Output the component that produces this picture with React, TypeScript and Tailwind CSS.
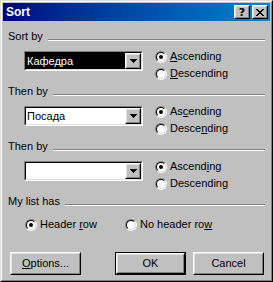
import React from 'react';

// Win98-style Excel "Sort" dialog

const raised = 'border border-t-white border-l-white border-r-black border-b-black';
const raisedInner = 'border border-t-[#dfdfdf] border-l-[#dfdfdf] border-r-[#808080] border-b-[#808080] bg-[#c0c0c0]';
const sunken = 'border border-t-[#808080] border-l-[#808080] border-r-white border-b-white';
const sunkenInner = 'border border-t-black border-l-black border-r-[#dfdfdf] border-b-[#dfdfdf]';

function Radio({ checked = false }: { checked?: boolean }) {
  return (
    <span className={`inline-block w-[12px] h-[12px] shrink-0 rounded-full ${sunken}`}>
      <span className={`flex items-center justify-center w-full h-full rounded-full bg-white ${sunkenInner}`}>
        {checked && <span className="w-[4px] h-[4px] rounded-full bg-black" />}
      </span>
    </span>
  );
}

function RadioRow({ checked, children }: { checked?: boolean; children: React.ReactNode }) {
  return (
    <div className="flex items-center h-[17px]">
      <Radio checked={checked} />
      <span className="ml-[3px] whitespace-nowrap">{children}</span>
    </div>
  );
}

function DownArrow() {
  return (
    <svg width="7" height="4" viewBox="0 0 7 4" shapeRendering="crispEdges">
      <rect x="0" y="0" width="7" height="1" fill="#000" />
      <rect x="1" y="1" width="5" height="1" fill="#000" />
      <rect x="2" y="2" width="3" height="1" fill="#000" />
      <rect x="3" y="3" width="1" height="1" fill="#000" />
    </svg>
  );
}

function Combo({ value, selected = false }: { value?: string; selected?: boolean }) {
  return (
    <div className={`w-[119px] h-[20px] ${sunken}`}>
      <div className={`flex h-full bg-white ${sunkenInner}`}>
        <div className={`flex-1 flex items-center pl-[1px] ${selected ? 'bg-black text-white' : 'text-black'}`}>
          {value}
        </div>
        <div className={`w-[16px] h-[16px] ${raised}`}>
          <div className={`w-full h-full flex items-center justify-center ${raisedInner}`}>
            <DownArrow />
          </div>
        </div>
      </div>
    </div>
  );
}

function SectionHeader({ label }: { label: string }) {
  return (
    <div className="flex items-start h-[13px]">
      <span className="whitespace-nowrap">{label}</span>
      <div className="flex-1 ml-[5px] mt-[9px] border-t border-t-[#808080] border-b border-b-white" />
    </div>
  );
}

function SortRow({ value, selected, asc, desc }: { value?: string; selected?: boolean; asc: React.ReactNode; desc: React.ReactNode }) {
  return (
    <div className="flex mt-[5px]">
      <div className="ml-[16px] mt-[3px]">
        <Combo value={value} selected={selected} />
      </div>
      <div className="ml-[12px] flex flex-col">
        <RadioRow checked>{asc}</RadioRow>
        <RadioRow>{desc}</RadioRow>
      </div>
    </div>
  );
}

function PushButton({ children, isDefault = false }: { children: React.ReactNode; isDefault?: boolean }) {
  const bevel = (
    <div className={`w-full h-full ${raised}`}>
      <div className={`w-full h-full flex items-center justify-center ${raisedInner}`}>{children}</div>
    </div>
  );
  return (
    <div className={`w-[71px] h-[23px] ${isDefault ? 'border border-black' : ''}`}>{bevel}</div>
  );
}

function CaptionButton({ children }: { children: React.ReactNode }) {
  return (
    <div className={`w-[16px] h-[14px] ${raised}`}>
      <div className={`w-full h-full flex items-center justify-center ${raisedInner}`}>{children}</div>
    </div>
  );
}

function CloseGlyph() {
  const rows = ['XX....XX', '.XX..XX.', '..XXXX..', '...XX...', '..XXXX..', '.XX..XX.', 'XX....XX'];
  return (
    <svg width="8" height="7" viewBox="0 0 8 7" shapeRendering="crispEdges">
      {rows.map((r, y) =>
        r.split('').map((c, x) => (c === 'X' ? <rect key={`${x}-${y}`} x={x} y={y} width="1" height="1" fill="#000" /> : null))
      )}
    </svg>
  );
}

export default function App() {
  return (
    <div className="w-[273px] h-[282px] font-['Liberation_Sans',Arial,sans-serif] text-[11px] leading-[13px] text-black">
      <div className="w-full h-full border border-t-[#dfdfdf] border-l-[#dfdfdf] border-r-black border-b-black">
        <div className="w-full h-full border border-t-white border-l-white border-r-[#808080] border-b-[#808080] bg-[#c0c0c0] p-px flex flex-col">
          {/* caption */}
          <div className="h-[18px] flex items-center bg-linear-to-r from-[#000080] to-[#1084d0] pl-[3px] pr-[2px]">
            <span className="text-white font-bold text-[12px] leading-[14px]">Sort</span>
            <div className="ml-auto flex gap-[2px]">
              <CaptionButton>
                <span className="font-bold text-[11px] leading-[11px] font-['DejaVu_Sans',sans-serif]">?</span>
              </CaptionButton>
              <CaptionButton>
                <CloseGlyph />
              </CaptionButton>
            </div>
          </div>

          {/* body */}
          <div className="flex flex-col pl-[5px] pr-[5px]">
            <div className="mt-[9px]">
              <SectionHeader label="Sort by" />
            </div>
            <SortRow
              value="Кафедра"
              selected
              asc={<><u>A</u>scending</>}
              desc={<><u>D</u>escending</>}
            />

            <div className="mt-[3px]">
              <SectionHeader label="Then by" />
            </div>
            <SortRow
              value="Посада"
              asc={<>As<u>c</u>ending</>}
              desc={<>Desce<u>n</u>ding</>}
            />

            <div className="mt-[3px]">
              <SectionHeader label="Then by" />
            </div>
            <SortRow
              asc={<>Ascend<u>i</u>ng</>}
              desc={<>Descendin<u>g</u></>}
            />

            <div className="mt-[3px]">
              <SectionHeader label="My list has" />
            </div>
            <div className="flex mt-[8px] ml-[17px]">
              <div className="w-[100px]">
                <RadioRow checked>Header <u>r</u>ow</RadioRow>
              </div>
              <RadioRow>No header ro<u>w</u></RadioRow>
            </div>

            <div className="flex mt-[19px] ml-[2px]">
              <PushButton>
                <span><u>O</u>ptions...</span>
              </PushButton>
              <div className="ml-[34px]">
                <PushButton isDefault>OK</PushButton>
              </div>
              <div className="ml-[7px]">
                <PushButton>Cancel</PushButton>
              </div>
            </div>
          </div>
        </div>
      </div>
    </div>
  );
}
